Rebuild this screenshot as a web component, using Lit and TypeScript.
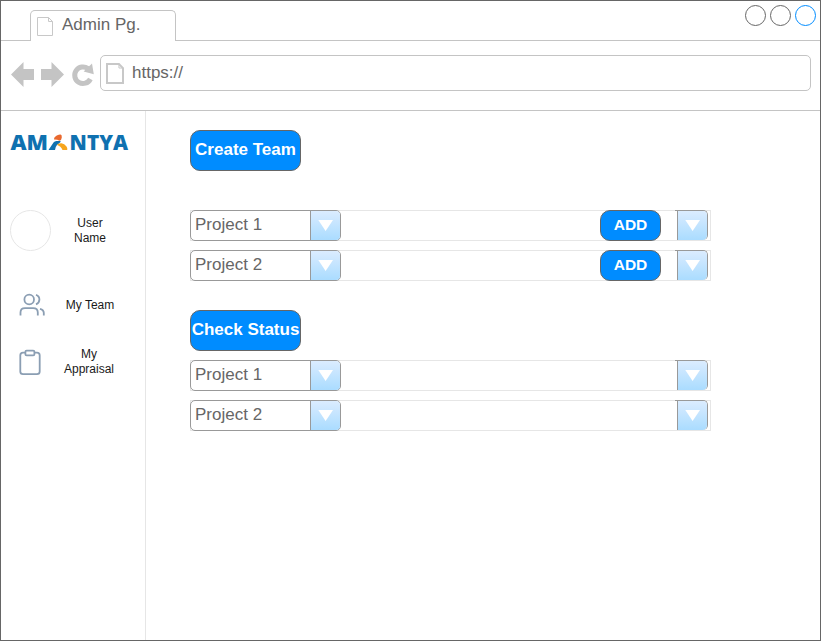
import { LitElement, html, svg, css, nothing } from "lit";
import { customElement, property } from "lit/decorators.js";

const pageIcon = (w: number, h: number, stroke: number) => {
  const s = stroke / 2;
  const f = w * 0.28;
  return html`<svg width=${w} height=${h} viewBox="0 0 ${w} ${h}" fill="none" stroke="#c8c8c8" stroke-width=${stroke}>
    ${svg`<path d="M${s} ${s}H${w - f}L${w - s} ${f}V${h - s}H${s}Z"/><path stroke-width="1" d="M${w - f} ${s}V${f}H${w - s}"/>`}
  </svg>`;
};

@customElement("select-arrow")
class SelectArrow extends LitElement {
  static styles = css`
    :host {
      display: flex;
      box-sizing: border-box;
      width: 30px;
      border-left: 1px solid #999;
      background: linear-gradient(#dbecff, #aadcff);
    }
    svg { display: block; }
  `;
  render() {
    return html`<svg width="29" height="29" viewBox="0 0 29 29"><path d="M7.3 9H22L14.6 20Z" fill="#fff" /></svg>`;
  }
}

@customElement("project-row")
class ProjectRow extends LitElement {
  @property() label = "";
  @property({ type: Boolean }) addable = false;

  static styles = css`
    :host {
      display: flex;
      box-sizing: border-box;
      width: 521px;
      height: 31px;
      border: 1px solid #e6e6e6;
      font: 17px/27px "Liberation Sans", Arial, sans-serif;
      color: #666;
    }
    .select {
      display: flex;
      box-sizing: border-box;
      width: 151px;
      height: 31px;
      margin: -1px 0 0 -1px;
      border: 1px solid #999;
      border-radius: 5px;
      overflow: hidden;
      background: #fff;
    }
    .value { width: 119px; box-sizing: border-box; padding-left: 4px; }
    .add {
      box-sizing: border-box;
      width: 61px;
      height: 31px;
      margin: -1px 14px 0 0;
      border: 1px solid #666;
      border-radius: 10px;
      background: #008cff;
      color: #fff;
      font-size: 15.5px;
      font-weight: bold;
      line-height: 28px;
      text-align: center;
    }
    .space { flex: 1; }
    .more {
      display: flex;
      justify-content: flex-end;
      box-sizing: border-box;
      width: 33px;
      height: 30px;
      margin: -1px 2px 0 0;
      border-top: 1px solid #999;
      border-right: 1px solid #999;
      border-radius: 0 5px 5px 0;
      overflow: hidden;
    }
  `;
  render() {
    return html`
      <div class="select"><div class="value">${this.label}</div><select-arrow></select-arrow></div>
      <div class="space"></div>
      ${this.addable ? html`<div class="add">ADD</div>` : nothing}
      <div class="more"><select-arrow></select-arrow></div>
    `;
  }
}

@customElement("app-root")
class AppRoot extends LitElement {
  static styles = css`
    :host {
      display: flex;
      flex-direction: column;
      box-sizing: border-box;
      width: 821px;
      height: 641px;
      border: 1px solid #666;
      background: #fff;
      color: #666;
      font-family: "Liberation Sans", Arial, sans-serif;
    }
    svg { display: block; flex: none; }
    .tabs {
      display: flex;
      justify-content: space-between;
      box-sizing: border-box;
      height: 40px;
      padding: 9px 0 0 29px;
      border-bottom: 1px solid #c4c4c4;
    }
    .tab {
      display: flex;
      box-sizing: border-box;
      width: 146px;
      height: 31px;
      padding: 6px 0 0 6px;
      gap: 9px;
      border: 1px solid #c4c4c4;
      border-bottom: 0;
      border-radius: 5px 5px 0 0;
      background: #fff;
      font-size: 17px;
      line-height: 16px;
    }
    .controls { display: flex; gap: 3px; margin: -6px 3px 0 0; }
    .toolbar {
      display: flex;
      align-items: flex-start;
      box-sizing: border-box;
      height: 70px;
      padding: 14px 9px 0 9px;
      border-bottom: 1px solid #c4c4c4;
    }
    .nav { margin: 6px 5px 0 0; }
    .url {
      display: flex;
      flex: 1;
      box-sizing: border-box;
      height: 36px;
      padding: 7px 0 0 5px;
      gap: 8px;
      border: 1px solid #c4c4c4;
      border-radius: 5px;
      font-size: 17px;
      line-height: 19px;
    }
    .body { display: flex; flex: 1; }
    .side {
      box-sizing: border-box;
      width: 145px;
      border-right: 1px solid #e6e6e6;
      padding: 20px 0 0 9px;
      color: #1a1a1a;
      font-size: 12px;
      line-height: 15px;
      text-align: center;
    }
    .logo { margin: -6px 0; }
    .item { display: flex; align-items: center; }
    .item .text { width: 62px; margin-left: 8px; }
    .user { height: 41px; margin-top: 55px; }
    .team { height: 30px; margin-top: 39px; }
    .appraisal { height: 32px; margin-top: 26px; }
    .item.appraisal .text { margin-left: 7px; }
    .main { padding: 19px 0 0 44px; }
    .btn {
      display: flex;
      justify-content: center;
      box-sizing: border-box;
      width: 111px;
      height: 41px;
      border: 1px solid #666;
      border-radius: 10px;
      background: #008cff;
      color: #fff;
      font-size: 17px;
      font-weight: bold;
      line-height: 37px;
      white-space: nowrap;
    }
    .rows { display: grid; gap: 9px; }
    .create { margin: 39px 0 29px; }
    .status { margin-top: 9px; }
  `;
  render() {
    return html`
      <div class="tabs">
        <div class="tab">${pageIcon(16, 19, 1)}<span>Admin Pg.</span></div>
        <div class="controls">
          ${["#666", "#666", "#008cff"].map(
            (c) => html`<svg width="22" height="22"><circle cx="10.5" cy="11.5" r="10" fill="none" stroke=${c} /></svg>`,
          )}
        </div>
      </div>
      <div class="toolbar">
        <svg class="nav" width="85" height="27" viewBox="10 61 85 27">
          <path fill="#c4c4c4" d="M11 74.5L23.5 62V69H34V80H23.5V87Z" />
          <path fill="#c4c4c4" d="M64 74.5L51.5 62V69H41V80H51.5V87Z" />
          <path fill="none" stroke="#c4c4c4" stroke-width="5" d="M88 68.6A8.3 8.3 0 1 0 90.4 79" />
          <path fill="#c4c4c4" d="M92 63.5L93.8 74.2L83.6 71.6Z" />
        </svg>
        <div class="url">${pageIcon(18, 21, 2)}<span>https://</span></div>
      </div>
      <div class="body">
        <div class="side">
          <svg class="logo" width="119" height="36" viewBox="0 -6 119 36" font-family="Open Sans" font-weight="800" font-size="21.5" fill="#0f71b0">
            <text x="0.4" y="19" textLength="37.6" lengthAdjust="spacingAndGlyphs">AM</text>
            <path d="M38.5 19L43.5 11.5Q44.5 10 46.5 10H50.5Q51 11 49.5 12L47 14Q45.5 15.5 45 19Z" />
            <path fill="#e9692f" d="M44 8.5Q43.5 6.5 46 5Q48 3.3 50.5 3.5Q52 3.7 51.8 6.5Q51.5 9.5 49.5 9.8Q47.5 8.4 44 8.5Z" />
            <path fill="#f6a51c" d="M46.8 13.7Q48.5 12 51.5 12.2Q54.5 12.4 56.5 15.5Q58 18.5 57 19H52.5Q51 15.2 46.8 13.7Z" />
            <text x="59.6" y="19" textLength="58.4" lengthAdjust="spacingAndGlyphs">NTYA</text>
          </svg>
          <div class="item user">
            <svg width="41" height="41"><circle cx="20.5" cy="20.5" r="20" fill="none" stroke="#e6e6e6" /></svg>
            <div class="text">User<br />Name</div>
          </div>
          <div class="item team">
            <svg width="41" height="30" viewBox="10 290 41 30" fill="none" stroke="#8b9eb3" stroke-width="1.8">
              <circle cx="29.2" cy="299.5" r="4.8" />
              <path d="M36 294.8Q39.4 296 39.4 299.6Q39.4 303 36 304.4" />
              <path d="M20.5 315.5V312.5Q20.5 308.2 25 308.2H33Q37.8 308.2 37.8 312.5V315.5" />
              <path d="M40 308.8Q43.8 309.8 43.8 313V315.5" />
            </svg>
            <div class="text">My Team</div>
          </div>
          <div class="item appraisal">
            <svg width="41" height="32" viewBox="10 346 41 32" fill="none" stroke="#8b9eb3" stroke-width="1.8">
              <path d="M25.5 352.7H23Q20.3 352.7 20.3 355.5V371.5Q20.3 374.2 23 374.2H37Q39.7 374.2 39.7 371.5V355.5Q39.7 352.7 37 352.7H34.5" />
              <rect x="25.4" y="350.6" width="9" height="4.8" rx="1.2" />
            </svg>
            <div class="text">My<br />Appraisal</div>
          </div>
        </div>
        <div class="main">
          <div class="btn">Create Team</div>
          <div class="rows create">
            <project-row label="Project 1" addable></project-row>
            <project-row label="Project 2" addable></project-row>
          </div>
          <div class="btn">Check Status</div>
          <div class="rows status">
            <project-row label="Project 1"></project-row>
            <project-row label="Project 2"></project-row>
          </div>
        </div>
      </div>
    `;
  }
}
